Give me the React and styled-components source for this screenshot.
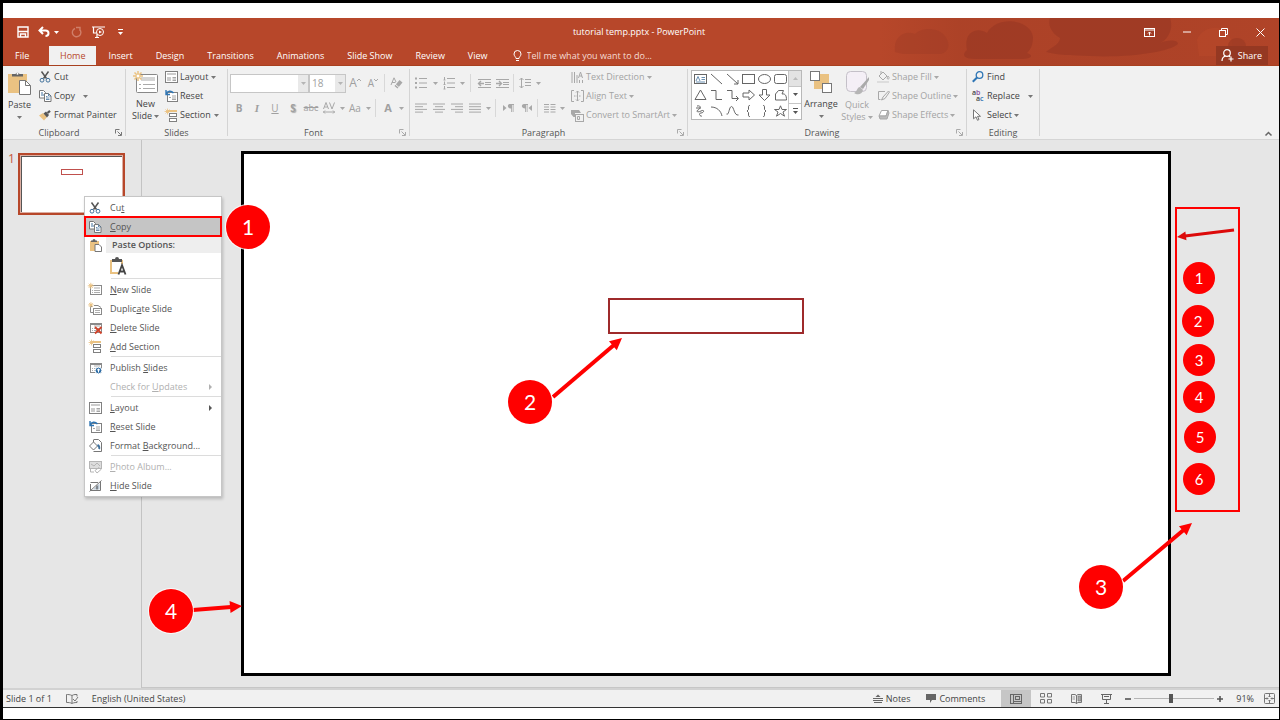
import React from "react";
import styled, { createGlobalStyle } from "styled-components";

const GlobalStyle = createGlobalStyle`
  *, *::before, *::after { box-sizing: border-box; }
  body { margin: 0; background: #fff; }
  body, button, input, select {
    font-family: "Open Sans", "Noto Sans", sans-serif;
    font-size: 9px;
    line-height: 12px;
    color: #444;
  }
  button { margin: 0; padding: 0; border: 0; background: none; text-align: left; white-space: nowrap; }
  svg { display: block; flex: none; overflow: visible; }
`;

const Frame = styled.div`
  min-height: 100vh;
  display: flex;
  flex-direction: column;
  border: solid #000;
  border-width: 3px 1px 1px 3px;
  padding: 15px 0 11px;
  background: #fff;
`;

/* ---------- title bar ---------- */

const Header = styled.header`
  position: relative;
  background: #b7472a;
  border-bottom: 1px solid #a8401f;
`;
const Backdrop = styled.svg`
  position: absolute;
  top: 0;
  right: 0;
  width: 400px;
  height: 47px;
`;
const TitleRow = styled.div`
  position: relative;
  display: grid;
  grid-template-columns: 1fr auto 1fr;
  align-items: center;
  height: 28px;
  padding-right: 4px;
`;
const QuickAccess = styled.div`
  display: flex;
  align-items: center;
  padding-left: 13px;
`;
const QuickButton = styled.button`
  display: flex;
  align-items: center;
  justify-content: center;
  width: ${(p) => p.$w}px;
  height: 20px;
`;
const DocTitle = styled.h1`
  margin: 0;
  font-size: 9px;
  font-weight: 400;
  line-height: 28px;
  color: #fff;
`;
const WindowButtons = styled.div`
  display: flex;
  justify-content: flex-end;
  margin-right: -4px;
`;
const WindowButton = styled.button`
  display: flex;
  align-items: center;
  justify-content: center;
  width: 37px;
  height: 26px;
`;
const TabRow = styled.nav`
  position: relative;
  display: flex;
  align-items: stretch;
  height: 19px;
`;
const Tab = styled.button`
  padding: 0 11px;
  margin-right: 1px;
  line-height: 20px;
  color: ${(p) => (p.$active ? "#b7472a" : "#fff")};
  background: ${(p) => (p.$active ? "#f1f1f1" : "transparent")};
`;
const FileTab = styled(Tab)`
  width: 45px;
  padding-left: 12px;
`;
const TellMe = styled.label`
  display: flex;
  align-items: center;
  gap: 5px;
  margin-left: 13px;
`;
const TellInput = styled.input`
  width: 160px;
  height: 18px;
  padding: 0;
  border: 0;
  background: none;
  outline: 0;
  &::placeholder { color: #f6dcd4; opacity: 1; }
`;
const Share = styled.button`
  display: flex;
  align-items: center;
  gap: 4px;
  margin-left: auto;
  margin-right: 11px;
  padding: 0 6px 0 5px;
  color: #fff;
  background: #953822;
`;

/* ---------- ribbon ---------- */

const RibbonBar = styled.div`
  display: flex;
  height: 74px;
  background: #f1f1f1;
  border-bottom: 1px solid #d5d5d5;
`;
const Group = styled.section`
  display: flex;
  flex: none;
  flex-direction: column;
  width: ${(p) => p.$w}px;
`;
const GroupBody = styled.div`
  display: flex;
  flex: 1;
  padding: 2px 0 0 ${(p) => p.$pad || 2}px;
`;
const GroupFooter = styled.div`
  display: flex;
  align-items: center;
  height: 13px;
`;
const GroupName = styled.h2`
  flex: 1;
  margin: 0;
  font-size: 9px;
  font-weight: 400;
  line-height: 12px;
  text-align: center;
  color: #555;
`;
const Launcher = styled.button`
  width: 10px;
`;
const GroupRule = styled.div`
  flex: none;
  width: 1px;
  margin: 3px 0;
  background: #d4d4d4;
`;
const Stack = styled.div`
  display: flex;
  flex-direction: column;
  gap: 1px;
  margin-left: ${(p) => p.$ml || 0}px;
`;
const Command = styled.button`
  display: flex;
  align-items: center;
  height: 18px;
  color: ${(p) => (p.disabled ? "#a3a3a3" : "#444")};
  > svg:first-child { margin-right: ${(p) => p.$gap || 3}px; }
`;
const BigCommand = styled.button`
  display: flex;
  flex-direction: column;
  align-items: center;
  width: ${(p) => p.$w}px;
  padding-top: 3px;
  color: ${(p) => (p.disabled ? "#a3a3a3" : "#444")};
  > svg:first-child { margin-bottom: 4px; }
`;
const CaretLine = styled.span`
  display: flex;
  align-items: center;
  justify-content: center;
  height: 12px;
`;
const ToolLines = styled.div`
  display: flex;
  flex-direction: column;
  gap: 7px;
  width: ${(p) => p.$w}px;
  padding-top: 6px;
`;
const ToolLine = styled.div`
  display: flex;
  align-items: center;
  height: 18px;
`;
const Tool = styled.button`
  display: flex;
  align-items: center;
  justify-content: center;
  width: ${(p) => p.$w || 18}px;
  height: 18px;
  color: #a0a0a0;
`;
const Glyph = styled.span`
  font-size: ${(p) => p.$size || 10}px;
  font-weight: ${(p) => (p.$bold ? 700 : 400)};
  font-style: ${(p) => (p.$italic ? "italic" : "normal")};
  font-family: ${(p) => (p.$italic ? '"Liberation Serif", serif' : "inherit")};
  text-decoration: ${(p) => p.$line || "none"};
  text-shadow: ${(p) => (p.$shadow ? "1px 1px 1px #aaa" : "none")};
`;
const ToolRule = styled.span`
  width: 1px;
  height: 18px;
  margin: 0 ${(p) => p.$m}px;
  background: #d8d8d8;
`;
const Combo = styled.span`
  display: flex;
  width: ${(p) => p.$w}px;
  height: 19px;
  border: 1px solid #c6c6c6;
  background: #fff;
`;
const ComboSelect = styled.select`
  flex: 1;
  min-width: 0;
  padding: 0 2px;
  border: 0;
  background: #fff;
  appearance: none;
  font-size: 10px;
  color: #a0a0a0;
  opacity: 1;
`;
const ComboArrow = styled.span`
  display: flex;
  align-items: center;
  justify-content: center;
  width: 10px;
  background: #e9e9e9;
`;
const Gallery = styled.div`
  display: flex;
  width: 111px;
  height: 50px;
  margin: 2px 0 0 1px;
  border: 1px solid #b8b8b8;
  background: #fff;
`;
const ShapeGrid = styled.div`
  display: grid;
  grid-template-columns: repeat(6, 16px);
  grid-template-rows: repeat(3, 16px);
`;
const ShapeButton = styled.button`
  display: flex;
  align-items: center;
  justify-content: center;
`;
const GallerySteps = styled.div`
  display: flex;
  flex: 1;
  flex-direction: column;
  border-left: 1px solid #c6c6c6;
`;
const GalleryStep = styled.button`
  display: flex;
  flex: 1;
  align-items: center;
  justify-content: center;
  background: ${(p) => (p.disabled ? "#e3e3e3" : "#fff")};
  & + & { border-top: 1px solid #c6c6c6; }
`;
const Collapse = styled.button`
  align-self: flex-end;
  margin: 0 7px 3px auto;
`;

/* ---------- workspace ---------- */

const Workspace = styled.main`
  position: relative;
  display: flex;
  flex: 1;
  background: #e6e6e6;
`;
const ThumbPane = styled.aside`
  display: flex;
  align-items: flex-start;
  flex: none;
  width: 139px;
  padding: 13px 0 0 5px;
  border-right: 1px solid #c3c3c3;
`;
const ThumbNumber = styled.span`
  width: 10px;
  font-size: 12px;
  color: #c5553a;
`;
const Thumb = styled.button`
  display: flex;
  justify-content: center;
  align-items: flex-start;
  width: 107px;
  height: 62px;
  padding-top: 14px;
  border: 2px solid #b7472a;
  background: #fff;
  box-shadow: inset 1px 1px 0 #dcaea2, inset -1px -1px 0 #dcaea2, inset 2px 2px 0 #555;
`;
const ThumbBox = styled.span`
  width: 22px;
  height: 6px;
  border: 1px solid #c0504d;
`;
const Stage = styled.div`
  display: flex;
  flex: 1;
  padding: 11px 108px 11px 99px;
  border-bottom: 1px solid #c6c6c6;
`;
const Slide = styled.article`
  display: flex;
  flex: 1;
  justify-content: center;
  align-items: flex-start;
  padding-top: 144px;
  border: 3px solid #000;
  background: #fff;
`;
const SlideBox = styled.div`
  width: 196px;
  height: 36px;
  border: 2px solid #9e2a2b;
`;

/* ---------- annotations ---------- */

const Arrows = styled.svg`
  position: absolute;
  inset: 0;
  width: 100%;
  height: 100%;
  z-index: 3;
  pointer-events: none;
`;
const Badge = styled.span`
  position: absolute;
  z-index: 4;
  left: ${(p) => p.$x}px;
  top: ${(p) => p.$y}px;
  display: flex;
  align-items: center;
  justify-content: center;
  width: ${(p) => (p.$small ? 32 : 44)}px;
  height: ${(p) => (p.$small ? 32 : 44)}px;
  padding-bottom: 1px;
  border-radius: 50%;
  background: #ff0000;
  color: #fff;
  font-family: Lato, sans-serif;
  font-size: ${(p) => (p.$small ? 15 : 21)}px;
  line-height: 24px;
  box-shadow: ${(p) => (p.$small ? "none" : "0 0 0 1px rgba(255,255,255,.8)")};
`;
const Callout = styled.div`
  position: absolute;
  left: 1172px;
  top: 67px;
  width: 65px;
  height: 305px;
  border: 2px solid #ff0000;
`;

/* ---------- context menu ---------- */

const Menu = styled.div`
  position: absolute;
  z-index: 2;
  left: 81px;
  top: 56px;
  width: 138px;
  padding: 1px 0;
  border: 1px solid #c6c6c6;
  background: #fff;
  box-shadow: 1px 2px 3px rgba(0, 0, 0, 0.2);
`;
const MenuItem = styled.button`
  display: grid;
  grid-template-columns: 20px 1fr 12px;
  align-items: center;
  width: 100%;
  height: 19px;
  padding-left: 4px;
  column-gap: 1px;
  color: ${(p) => (p.disabled ? "#b0b0b0" : "#555")};
  background: ${(p) => (p.$active ? "#c5c5c5" : "transparent")};
  outline: ${(p) => (p.$active ? "2px solid #ff0000" : "0")};
  outline-offset: -1px;
`;
const MenuHeading = styled.div`
  display: flex;
  align-items: center;
  height: 18px;
  padding-left: 4px;
  font-weight: 600;
  color: #555;
`;
const MenuHeadingText = styled.span`
  flex: 1;
  margin-left: 4px;
  padding-left: 6px;
  line-height: 16px;
  background: #eee;
`;
const PasteRow = styled.div`
  height: 24px;
  padding: 3px 0 0 24px;
`;
const MenuRule = styled.hr`
  height: 1px;
  margin: 0 0 1px 26px;
  border: 0;
  background: #dcdcdc;
`;

/* ---------- status bar ---------- */

const StatusBar = styled.footer`
  display: flex;
  align-items: center;
  height: 20px;
  padding: 0 4px 0 3px;
  border-top: 2px solid #d2d2d2;
  border-bottom: 1px solid #333;
  background: #f1f1f1;
`;
const StatusText = styled.span`
  margin-right: 14px;
`;
const Language = styled.button`
  margin-left: 14px;
`;
const StatusButton = styled.button`
  display: flex;
  align-items: center;
  gap: 3px;
  margin-right: 16px;
`;
const ViewButton = styled.button`
  display: flex;
  align-items: center;
  justify-content: center;
  width: 30px;
  height: 17px;
  background: ${(p) => (p.$active ? "#c6c6c6" : "transparent")};
`;
const Push = styled.span`
  flex: 1;
`;
const ZoomGroup = styled.div`
  display: flex;
  align-items: center;
  gap: 3px;
  padding: 0 13px 0 4px;
`;
const ZoomValue = styled.span`
  margin-right: 10px;
`;
const ZoomSlider = styled.input`
  width: 80px;
  height: 12px;
  margin: 0;
  appearance: none;
  background: linear-gradient(#b5b5b5, #b5b5b5) center / 100% 1px no-repeat;
  &::-webkit-slider-thumb {
    appearance: none;
    width: 4px;
    height: 9px;
    background: #555;
  }
`;

/* ---------- icons ---------- */

const G = "#777";
const D = "#a8a8a8";
const BLUE = "#41719c";
const GOLD = "#eac282";

const Icon = ({ w = 12, h = 12, c = G, sw = 1, children }) => (
  <svg width={w} height={h} viewBox={`0 0 ${w} ${h}`} fill="none" stroke={c} strokeWidth={sw} aria-hidden="true">
    {children}
  </svg>
);
const CaretSvg = styled.svg`
  margin-left: ${(p) => p.$ml}px;
`;
const Caret = ({ c = "#777", ml = 0 }) => (
  <CaretSvg $ml={ml} width="5" height="3" viewBox="0 0 5 3" aria-hidden="true">
    <path d="M0 0h5L2.500 3z" fill={c} />
  </CaretSvg>
);
const LaunchIcon = ({ c = "#888" }) => (
  <Icon w={7} h={7} c={c}><path d="M.5 4.500v-4h4M2.500 2.500l3.500 3.500M6.500 3v3.500H3" /></Icon>
);
const Star = ({ x = 0, y = 0, r = 3 }) => (
  <g transform={`translate(${x} ${y}) scale(${r / 3})`} stroke={GOLD}>
    <path d="M3-.5v7M-.5 3h7M.6.6l4.800 4.800M5.400.6L.6 5.400" />
    <circle cx="3" cy="3" r="1.500" fill={GOLD} stroke="none" />
  </g>
);
const ScissorsIcon = () => (
  <Icon w={12} h={12}>
    <path d="M2.500.5l5 7M9.500.5l-5 7" strokeWidth="1.500" stroke="#555" />
    <circle cx="3" cy="9.200" r="1.900" stroke={BLUE} /><circle cx="9" cy="9.200" r="1.900" stroke={BLUE} />
  </Icon>
);
const CopyIcon = () => (
  <Icon w={13} h={12}>
    <path d="M.5.5h4l2 2v5.500h-6z" fill="#fff" /><path d="M2 3h2M2 5h3" stroke={BLUE} />
    <path d="M5.500 3.500h4l2.500 2.500v5.500H5.500z" fill="#fff" /><path d="M9.500 3.500V6H12M7 6.500h1.500M7 8h3.500M7 9.500h3.500" stroke={BLUE} strokeWidth=".8" />
  </Icon>
);
const BrushIcon = () => (
  <Icon w={13} h={11}>
    <path d="M0 5.500L4 3l4 4-3 3.500z" fill={GOLD} stroke="none" />
    <path d="M4.500 3.500L7 1.500l3 3.500-2 2.500z" fill="#555" stroke="none" /><path d="M8.500 3L11 .8" strokeWidth="2.200" stroke="#555" />
  </Icon>
);
const PasteIcon = () => (
  <Icon w={23} h={24}>
    <path d="M0 3h19v19H0z" fill={GOLD} stroke="none" /><path d="M4 5.500V3h3.500a2.200 2.200 0 014 0H15v2.500z" fill="#666" stroke="none" />
    <circle cx="9.500" cy="2.800" r="1" fill="#fff" stroke="none" />
    <path d="M11.500 9.500h6l5 5v9h-11z" fill="#fff" stroke="#777" /><path d="M17.500 9.500v5h5" stroke="#777" />
  </Icon>
);
const NewSlideIcon = () => (
  <Icon w={25} h={23}>
    <rect x="3.500" y="3.500" width="21" height="18" rx="1" fill="#fff" stroke="#888" />
    <path d="M8 6h14v4H8z" fill="#d5d5d5" stroke="none" /><path d="M6 13.500h2M10 13.500h12M6 17.500h2M10 17.500h12" stroke="#aaa" />
    <g stroke={GOLD} strokeWidth="1.500"><path d="M5 0v10M0 5h10M1.500 1.500l7 7M8.500 1.500l-7 7" /></g>
    <circle cx="5" cy="5" r="2" fill="#fff" stroke={GOLD} />
  </Icon>
);
const LayoutIcon = () => (
  <Icon w={13} h={12} c="#808080">
    <rect x=".5" y=".5" width="12" height="11" fill="#fff" /><path d="M2 2h9v2H2zM2 6h4v4H2z" fill="#ccc" stroke="none" /><path d="M7.500 6.500h3.500M7.500 8h3.500M7.500 9.500h3.500" strokeWidth=".7" />
  </Icon>
);
const ResetIcon = () => (
  <Icon w={13} h={12} c="#808080">
    <rect x="2.500" y="2.500" width="10" height="9" fill="#fff" /><path d="M4 7.500h2M7 6h4M7 8h4M7 9.500h4" strokeWidth=".7" />
    <path d="M1 0v4.500h4M1 4C2.500.8 6 .2 8.500 3" stroke="#2f76b5" strokeWidth="1.400" />
  </Icon>
);
const SectionIcon = () => (
  <Icon w={13} h={13} c="#808080">
    <path d="M3 2h9" stroke={GOLD} strokeWidth="2" /><Star r={2.500} />
    <rect x="4.500" y="4.500" width="7" height="3" fill="#fff" /><rect x="4.500" y="9.500" width="7" height="3" fill="#fff" />
  </Icon>
);
const EraserIcon = () => (
  <Icon w={13} h={12} c={D}>
    <path d="M1 8L4 .8 6 5M2 5.500h3.500" /><path d="M4.500 9l5-6 3 2.500-5 6z" fill={D} stroke="none" /><path d="M5 7l4 3.500" stroke="#f1f1f1" />
  </Icon>
);
const BulletsIcon = ({ numbered }) => (
  <Icon w={12} h={12} c={D}>
    {[1.5, 6, 10.5].map((y) => (
      <g key={y}>
        {numbered ? <path d={`M1.500 ${y - 1.500}v3M.5 ${y + 1.500}h2`} /> : <rect x="0" y={y - 1} width="2" height="2" fill={D} stroke="none" />}
        <path d={`M4 ${y}h8`} />
      </g>
    ))}
  </Icon>
);
const IndentIcon = ({ flip }) => (
  <Icon w={13} h={11} c={D}>
    <path d="M0 1.500h13M7 4.500h6M7 6.500h6M0 9.500h13" />
    <path d={flip ? "M0 5.500h5M3 3l2.500 2.500L3 8" : "M6 5.500H1M3 3L.5 5.500 3 8"} strokeWidth="1.400" />
  </Icon>
);
const SpacingIcon = () => (
  <Icon w={12} h={12} c={D}><path d="M2.500 1v10M.5 3l2-2 2 2M.5 9l2 2 2-2M6 2.500h6M6 5.500h6M6 8.500h6" /></Icon>
);
const AlignIcon = ({ rows }) => (
  <Icon w={12} h={10} c={D}>
    {rows.map(([x, len], i) => <path key={i} d={`M${x} ${i * 2.700 + 1}h${len}`} />)}
  </Icon>
);
const PilcrowIcon = ({ flip }) => (
  <svg width="11" height="8" viewBox="0 0 11 8" aria-hidden="true">
    <path d={flip ? "M11 1L7.500 4 11 7z" : "M0 1l3.500 3L0 7z"} fill={D} />
    <path transform={flip ? "translate(-4 0)" : undefined} d="M7 0h4v1h-.5v7h-.8V1H9v7h-.8V4.500C4 4.500 4 0 7 0z" fill={D} />
  </svg>
);
const ColumnsIcon = () => (
  <Icon w={11} h={9} c={D}><path d="M0 .5h5M0 3h5M0 5.500h5M0 8h5M6.500.5h5M6.500 3h5M6.500 5.500h5M6.500 8h5" /></Icon>
);
const TextDirectionIcon = () => (
  <Icon w={13} h={13} c={D}><path d="M1 1v11M3.500 1v11M6 4v8M7.500 7l2-6 2 6M8.500 5h2.500M8.500 9v3M11.500 9v3" /></Icon>
);
const AlignTextIcon = () => (
  <Icon w={13} h={12} c={D}><path d="M3 .5H.5v11H3M10 .5h2.500v11H10M6.500 1v10M5 2.500L6.500 1 8 2.500M5 9.500L6.500 11 8 9.500" /><path d="M3 6h7" strokeDasharray="1.500 1" /></Icon>
);
const SmartArtIcon = () => (
  <Icon w={13} h={13} c={D}><path d="M0 1h8l2 3H4v4H2.500L0 5z" fill={D} stroke="none" /><rect x="4.500" y="5.500" width="8" height="7" fill="#f1f1f1" /><path d="M6.500 7.500h2v3h-2z" /></Icon>
);
const ArrangeIcon = () => (
  <Icon w={23} h={23}><path d="M4 3h15v15H4z" fill={GOLD} stroke="none" /><rect x=".5" y=".5" width="9" height="9" fill="#fff" /><rect x="12.500" y="12.500" width="9" height="9" fill="#fff" /><path d="M4 11h0v7M11 3V0" stroke="none" /></Icon>
);
const QuickStylesIcon = () => (
  <Icon w={25} h={24} c="#c4c0c8">
    <rect x="1.500" y=".5" width="20" height="20" rx="4" fill="#f4eff6" />
    <path d="M24 6l-9 10 3 2 6-9z" fill="#aaa" stroke="none" /><path d="M15 16c-3 0-3 5-6 6 3 2 8 2 9-3z" fill="#b5b5b5" stroke="none" />
  </Icon>
);
const FillIcon = () => (
  <Icon w={13} h={12} c={D}><path d="M2 5l4-4 4 4-4 4zM4 3V0M11 5c2 2 1 3 0 3s-1-1 0-3" /><path d="M0 11h12" stroke="#ddd" strokeWidth="2" /></Icon>
);
const OutlineIcon = () => (
  <Icon w={13} h={12} c={D}><path d="M8 1.500H1.500v8h2M11.500 1L6 7l-1.500 3L8 8.500 12.500 2z" /></Icon>
);
const EffectsIcon = () => (
  <Icon w={13} h={12} c={D}><path d="M2 7l2.500-5.500H11L9 7z" fill="#fff" /><path d="M2 7l1 3h7l2-6-1-2.500L9 7z" fill="#bbb" /></Icon>
);
const FindIcon = () => (
  <Icon w={12} h={12} c="#2f76b5"><circle cx="7.500" cy="4" r="3.300" strokeWidth="1.300" /><path d="M5 6.500L.8 10.800" strokeWidth="2" /></Icon>
);
const ReplaceArt = styled.span`
  display: grid;
  grid-template-rows: 6px 6px;
  width: 13px;
  margin-right: 2px;
  font-size: 7px;
  font-weight: 600;
  line-height: 6px;
`;
const ReplaceWord = styled.span`
  padding-left: ${(p) => p.$in || 0}px;
  > b { font-weight: 600; color: ${(p) => p.$c}; }
`;
const ReplaceIcon = () => (
  <ReplaceArt aria-hidden="true">
    <ReplaceWord $c="#8a4a9c">a<b>b</b></ReplaceWord>
    <ReplaceWord $c="#2f76b5" $in={4}>a<b>c</b></ReplaceWord>
  </ReplaceArt>
);
const SelectIcon = () => (
  <Icon w={9} h={12}><path d="M1.500.8v9L4 7.800l1.500 3.500 1.500-.8L5.500 7.300h3z" fill="#fff" /></Icon>
);

const MiniSlide = ({ children, star }) => (
  <Icon w={13} h={12} c="#8a8a8a">
    <rect x="1.500" y="1.500" width="11" height="9" fill="#fff" /><path d="M5 4h6M3 6.500h1M5 6.500h6M3 8.500h1M5 8.500h6" strokeWidth=".7" />
    {star && <Star r={2.600} x={-0.8} y={-0.8} />}
    {children}
  </Icon>
);
const DuplicateIcon = () => (
  <Icon w={13} h={12} c="#8a8a8a"><path d="M3.500 3.500H1.500v6h3M5 2.500h4l3 2" /><rect x="4.500" y="5.500" width="8" height="6" fill="#fff" /><path d="M6 7.500h5M6 9.500h5" strokeWidth=".7" /><Star r={2.400} x={-0.5} y={-0.5} /></Icon>
);
const DeleteIcon = () => (
  <MiniSlide><path d="M1 2h12" strokeWidth="2" /><path d="M6 5l6.500 6.500M12.500 5L6 11.500" stroke="#d1432b" strokeWidth="1.800" /></MiniSlide>
);
const PublishIcon = () => (
  <MiniSlide><path d="M1 2h12" strokeWidth="2" /><circle cx="9.500" cy="8.500" r="3.400" fill="#2f6ea5" stroke="#fff" /><path d="M9.500 10.500v-3.500M8 8.300L9.500 7l1.500 1.300" stroke="#fff" /></MiniSlide>
);
const BackgroundIcon = () => (
  <Icon w={13} h={13} c="#777"><path d="M4.500.5h5l3 3v9h-8" fill="#fff" /><path d="M0.500 7l4-4 4 4-4 4zM4.500 3V1" fill="#fff" /><path d="M8.500 6c2 1 2 3 1.500 4" stroke={BLUE} strokeWidth="2" /></Icon>
);
const AlbumIcon = () => (
  <Icon w={13} h={12} c="#b5b5b5"><rect x=".5" y=".5" width="12" height="7" fill="#ddd" /><path d="M2 3l3 2 3-3 3 3M1.500 8v3H5M6 9.500l4-3 2 2-4 3.500z" /></Icon>
);
const HideIcon = () => (
  <Icon w={13} h={12} c="#777"><path d="M1.500 4v6.500h10V1.500M1.500 2.500H9M.5 11.500L12.500.5" /><path d="M10.500 3.500v6H4z" fill="#b9c7d4" stroke="none" /><path d="M8 5.500v4" stroke="#444" /></Icon>
);
const MenuPasteIcon = () => (
  <Icon w={13} h={13}><path d="M1 2h9v10H1z" fill={GOLD} stroke="none" /><path d="M2 3V1.500h1.500a1.500 1.500 0 013 0H8V3z" fill="#666" stroke="none" /><path d="M6 5.500h4l2.500 2.500v4.500H6z" fill="#fff" /></Icon>
);
const KeepTextIcon = () => (
  <svg width="18" height="19" viewBox="0 0 18 19" aria-hidden="true">
    <path d="M2 3v13h7M13 3v4" fill="none" stroke={GOLD} strokeWidth="2" /><path d="M3 5V2h3a2 2 0 014 0h3v3z" fill="#555" />
    <path d="M9.500 17.500L13 8l3.500 9.500M10.500 14.500h5" fill="none" stroke="#444" strokeWidth="1.800" />
  </svg>
);

const shapes = [
  ["Text box", <><rect x=".5" y="1.500" width="12" height="9" /><path d="M2 8l2-4.500L6 8M7.500 4.500h3.500M7.500 6.500h3.500M2 9h9" stroke={BLUE} strokeWidth=".8" /></>],
  ["Line", <path d="M1 1l11 10" />],
  ["Arrow line", <path d="M1 1l11 10M12 7v4H8" />],
  ["Rectangle", <rect x=".5" y="1.500" width="12" height="9" />],
  ["Oval", <ellipse cx="6.500" cy="6" rx="6" ry="4.500" />],
  ["Rounded rectangle", <rect x=".5" y="1.500" width="12" height="9" rx="2" />],
  ["Triangle", <path d="M6.500 1L12 10.500H1z" />],
  ["Elbow connector", <path d="M1 1.500h5v9h6" />],
  ["Elbow arrow", <path d="M1 1.500h5v8h6M10 7l2.500 2.500L10 12" />],
  ["Right arrow", <path d="M1 4h6V1l5.500 5L7 11V8H1z" />],
  ["Down arrow", <path d="M4.500.5h4V6H12l-5.500 5.500L1 6h3.500z" />],
  ["Freeform", <path d="M1.500 11V5l3-3.500h5L8 5c3-.5 4.500 1 4.500 6z" />],
  ["Scribble", <path d="M3 1c5-1 3 3 1 4S3 8 7 6s3 2 0 2-1 4 1 3M2 3l5 0" />],
  ["Arc", <path d="M1 2c6 0 10 4 11 9" />],
  ["Curve", <path d="M.5 9C3 11 3 1.500 5.500 1.500S8 11 12.500 10" />],
  ["Left brace", <path d="M8 .5C6.500.5 6.500 1 6.500 2v2.500L5 6l1.500 1.500V10c0 1 0 1.500 1.500 1.500" />],
  ["Right brace", <path d="M5 .5C6.500.5 6.500 1 6.500 2v2.500L8 6 6.500 7.500V10c0 1 0 1.500-1.500 1.500" />],
  ["Star", <path d="M6.500.8L8 4.500h4.500L9 7l1.500 4.200-4-2.700-4 2.700L4 7 .5 4.500H5z" />],
];

const menuItems = [
  { icon: <MiniSlide star />, text: <><u>N</u>ew Slide</> },
  { icon: <DuplicateIcon />, text: <>Duplic<u>a</u>te Slide</> },
  { icon: <DeleteIcon />, text: <><u>D</u>elete Slide</> },
  { icon: <SectionIcon />, text: <><u>A</u>dd Section</> },
  null,
  { icon: <PublishIcon />, text: <>Publish <u>S</u>lides</> },
  { icon: <span />, text: <>Check for <u>U</u>pdates</>, disabled: true, sub: true },
  null,
  { icon: <LayoutIcon />, text: <><u>L</u>ayout</>, sub: true },
  { icon: <ResetIcon />, text: <><u>R</u>eset Slide</> },
  { icon: <BackgroundIcon />, text: <>Format <u>B</u>ackground...</> },
  null,
  { icon: <AlbumIcon />, text: <><u>P</u>hoto Album...</>, disabled: true },
  { icon: <HideIcon />, text: <><u>H</u>ide Slide</> },
];

const arrows = [
  [550, 257, 619, 198],
  [1120, 441, 1189, 383],
  [190, 470, 239, 466],
];
const badges = [
  [223, 65, 1], [505, 240, 2], [1076, 425, 3], [146, 449, 4],
];
const smallBadges = [
  [1180, 122, 1], [1179, 165, 2], [1180, 204, 3], [1180, 241, 4], [1181, 281, 5], [1180, 323, 6],
];

const Arrow = ({ p: [x1, y1, x2, y2], color = "#ff0000", width = 4, head = 12 }) => {
  const len = Math.hypot(x2 - x1, y2 - y1);
  const angle = (Math.atan2(y2 - y1, x2 - x1) * 180) / Math.PI;
  return (
    <g transform={`translate(${x1} ${y1}) rotate(${angle})`}>
      <path d={`M0 0H${len - head + 1}`} stroke={color} strokeWidth={width} />
      <path d={`M${len} 0l${-head} ${-head / 2}v${head}z`} fill={color} />
    </g>
  );
};

const RibbonGroup = ({ name, w, pad, launch, children }) => (
  <>
    <Group $w={w} aria-label={name}>
      <GroupBody $pad={pad}>{children}</GroupBody>
      <GroupFooter>
        <GroupName>{name}</GroupName>
        {launch && <Launcher aria-label={`${name} settings`}><LaunchIcon c={launch} /></Launcher>}
      </GroupFooter>
    </Group>
    <GroupRule />
  </>
);

const TitleArea = () => (
  <Header>
    <Backdrop viewBox="0 0 400 47" fill="#9c3a24" aria-hidden="true">
      <defs>
        <linearGradient id="shade">
          <stop offset="0" stopColor="#a03c24" stopOpacity="0" />
          <stop offset=".2" stopColor="#a03c24" stopOpacity=".45" />
          <stop offset=".75" stopColor="#a03c24" stopOpacity=".4" />
          <stop offset="1" stopColor="#a03c24" stopOpacity=".3" />
        </linearGradient>
      </defs>
      <rect width="400" height="47" fill="url(#shade)" />
      <path d="M16 34C14 18 26 12 36 16c8-8 24-6 30 2 6 8 4 16-4 18H24z" opacity=".35" />
      <path d="M88 32C84 14 98 8 108 15c10-18 44-14 46 4 0 10-4 14-6 16 6 2 6 5-4 6H96c-14 0-12-6-8-9z" opacity=".8" />
      <path d="M171 0h120c4 10-2 22-10 25 6-3 18-4 18 1-8 8-50 14-88 12-16-1-28 0-44-4 6-5 14-8 14-14-10-6-12-14-10-20z" opacity=".8" />
      <path d="M318 22c4-12 22-16 28-8 8 6 10 14 4 24h-30z" fill="#b7472a" opacity=".7" />
      <ellipse cx="358" cy="28" rx="9" ry="8" opacity=".7" />
    </Backdrop>
    <TitleRow>
      <QuickAccess>
        <QuickButton $w={13} aria-label="Save">
          <Icon w={12} h={12} c="#fff"><path d="M1 1h10v10H1z" strokeWidth="1.400" /><path d="M1 5.500h10M3.500 11V8h5v3" strokeWidth="1.400" /></Icon>
        </QuickButton>
        <QuickButton $w={38} aria-label="Undo">
          <Icon w={12} h={10} c="#fff"><path d="M5 0L1.500 3.500 5 7M2 3.500h5.500c4 0 4 5.500 0 5.500" strokeWidth="2" /></Icon>
          <Caret c="#fff" ml={4} />
        </QuickButton>
        <QuickButton $w={18} aria-label="Redo">
          <Icon w={11} h={11} c="#d07f6a"><path d="M4 1.500a4.300 4.300 0 104.500.8M5 .5h4V4" strokeWidth="1.400" /></Icon>
        </QuickButton>
        <QuickButton $w={26} aria-label="Start slide show">
          <Icon w={13} h={12} c="#fff"><path d="M0 1h13M1.500 1v6H5M3 11.500h4M5 8v3" strokeWidth="1.200" /><circle cx="8" cy="6" r="3.500" /><path d="M7 4.500l3 1.500-3 1.500z" fill="#fff" stroke="none" /></Icon>
        </QuickButton>
        <QuickButton $w={18} aria-label="Customize toolbar">
          <Icon w={5} h={6} c="#fff"><path d="M0 .5h5" /><path d="M0 3h5L2.500 6z" fill="#fff" stroke="none" /></Icon>
        </QuickButton>
      </QuickAccess>
      <DocTitle>tutorial temp.pptx - PowerPoint</DocTitle>
      <WindowButtons>
        <WindowButton aria-label="Ribbon options"><Icon w={11} h={9} c="#fff"><rect x=".5" y=".5" width="10" height="8" /><path d="M1 2h9M5.500 7.500V4M4 5.500L5.500 4 7 5.500" /></Icon></WindowButton>
        <WindowButton aria-label="Minimize"><Icon w={8} h={2} c="#fff"><path d="M0 1h8" /></Icon></WindowButton>
        <WindowButton aria-label="Restore"><Icon w={9} h={9} c="#fff"><rect x=".5" y="2.500" width="6" height="6" /><path d="M2.500 2V.5h6v6H7" /></Icon></WindowButton>
        <WindowButton aria-label="Close"><Icon w={9} h={9} c="#fff"><path d="M.5.5l8 8M8.500.5l-8 8" /></Icon></WindowButton>
      </WindowButtons>
    </TitleRow>
    <TabRow>
      <FileTab>File</FileTab>
      <Tab $active>Home</Tab>
      {["Insert", "Design", "Transitions", "Animations", "Slide Show", "Review", "View"].map((t) => <Tab key={t}>{t}</Tab>)}
      <TellMe>
        <Icon w={9} h={12} c="#fff"><path d="M3 8.500C3 7 1 6 1 4a3.500 3.500 0 017 0c0 2-2 3-2 4.500zM3 10.500h3" /></Icon>
        <TellInput placeholder="Tell me what you want to do..." aria-label="Tell me what you want to do" />
      </TellMe>
      <Share>
        <Icon w={13} h={13} c="#fff"><circle cx="6" cy="4" r="3.300" strokeWidth="1.200" /><path d="M1 12c0-3 2-4.500 3.500-5M8 7l1 1M10 7.500v5M7.500 10h5" strokeWidth="1.200" /></Icon>
        Share
      </Share>
    </TabRow>
  </Header>
);

const Ribbon = () => (
  <RibbonBar>
    <RibbonGroup name="Clipboard" w={122} pad={3} launch="#777">
      <BigCommand $w={27}><PasteIcon />Paste<CaretLine><Caret /></CaretLine></BigCommand>
      <Stack $ml={6}>
        <Command><ScissorsIcon />Cut</Command>
        <Command $gap={2}><CopyIcon />Copy<Caret ml={8} /></Command>
        <Command $gap={2}><BrushIcon />Format Painter</Command>
      </Stack>
    </RibbonGroup>
    <RibbonGroup name="Slides" w={101} pad={5}>
      <BigCommand $w={29}><NewSlideIcon />New<CaretLine>Slide<Caret ml={2} /></CaretLine></BigCommand>
      <Stack $ml={5}>
        <Command $gap={2}><LayoutIcon />Layout<Caret ml={3} /></Command>
        <Command $gap={2}><ResetIcon />Reset</Command>
        <Command $gap={2}><SectionIcon />Section<Caret ml={3} /></Command>
      </Stack>
    </RibbonGroup>
    <RibbonGroup name="Font" w={181} launch="#aaa">
      <ToolLines $w={178}>
        <ToolLine>
          <Combo $w={79}><ComboSelect disabled aria-label="Font"><option></option></ComboSelect><ComboArrow><Caret c="#b5b5b5" /></ComboArrow></Combo>
          <Combo $w={37}><ComboSelect disabled aria-label="Font size"><option>18</option></ComboSelect><ComboArrow><Caret c="#b5b5b5" /></ComboArrow></Combo>
          <Tool disabled aria-label="Grow font"><Glyph $size={12}>A</Glyph><Icon w={4} h={9} c={D}><path d="M0 2l2-2 2 2" /></Icon></Tool>
          <Tool disabled aria-label="Shrink font"><Glyph>A</Glyph><Icon w={4} h={9} c={D}><path d="M0 0l2 2 2-2" /></Icon></Tool>
          <ToolRule $m={2} />
          <Tool disabled aria-label="Clear formatting"><EraserIcon /></Tool>
        </ToolLine>
        <ToolLine>
          <Tool disabled><Glyph $bold>B</Glyph></Tool>
          <Tool disabled><Glyph $bold $italic $size={11}>I</Glyph></Tool>
          <Tool disabled><Glyph $line="underline">U</Glyph></Tool>
          <Tool disabled><Glyph $bold $shadow>S</Glyph></Tool>
          <Tool disabled><Glyph $line="line-through" $size={9}>abc</Glyph></Tool>
          <Tool disabled aria-label="Character spacing">
            <Icon w={12} h={12} c={D}><path d="M.5 7L3 .5 5.500 7M1.500 5h3M6.500.5L9 7 11.500.5M0 10h12M2 8.500L.5 10 2 11.500M10 8.500l1.500 1.500-1.500 1.500" /></Icon>
          </Tool>
          <Tool $w={8} disabled aria-label="Spacing choices"><Caret c={D} /></Tool>
          <Tool disabled><Glyph>Aa</Glyph></Tool>
          <Tool $w={8} disabled aria-label="Case choices"><Caret c={D} /></Tool>
          <ToolRule $m={3} />
          <Tool disabled><Glyph $size={11} $bold>A</Glyph></Tool>
          <Tool $w={8} disabled aria-label="Color choices"><Caret c={D} /></Tool>
        </ToolLine>
      </ToolLines>
    </RibbonGroup>
    <RibbonGroup name="Paragraph" w={277} launch="#aaa">
      <ToolLines $w={159}>
        <ToolLine>
          <Tool disabled aria-label="Bullets"><BulletsIcon /></Tool>
          <Tool $w={10} disabled aria-label="Bullet choices"><Caret c={D} /></Tool>
          <Tool disabled aria-label="Numbering"><BulletsIcon numbered /></Tool>
          <Tool $w={8} disabled aria-label="Numbering choices"><Caret c={D} /></Tool>
          <ToolRule $m={4} />
          <Tool disabled aria-label="Decrease indent"><IndentIcon /></Tool>
          <Tool disabled aria-label="Increase indent"><IndentIcon flip /></Tool>
          <ToolRule $m={2} />
          <Tool disabled aria-label="Line spacing"><SpacingIcon /></Tool>
          <Tool $w={8} disabled aria-label="Line spacing choices"><Caret c={D} /></Tool>
        </ToolLine>
        <ToolLine>
          <Tool disabled aria-label="Align left"><AlignIcon rows={[[0, 12], [0, 8], [0, 12], [0, 8]]} /></Tool>
          <Tool disabled aria-label="Center"><AlignIcon rows={[[0, 12], [2, 8], [0, 12], [2, 8]]} /></Tool>
          <Tool disabled aria-label="Align right"><AlignIcon rows={[[0, 12], [4, 8], [0, 12], [4, 8]]} /></Tool>
          <Tool disabled aria-label="Justify"><AlignIcon rows={[[0, 12], [0, 12], [0, 12], [0, 12]]} /></Tool>
          <Tool $w={8} disabled aria-label="Justify choices"><Caret c={D} /></Tool>
          <ToolRule $m={3} />
          <Tool disabled aria-label="Left to right"><PilcrowIcon /></Tool>
          <Tool disabled aria-label="Right to left"><PilcrowIcon flip /></Tool>
          <ToolRule $m={2} />
          <Tool disabled aria-label="Columns"><ColumnsIcon /></Tool>
          <Tool $w={8} disabled aria-label="Column choices"><Caret c={D} /></Tool>
        </ToolLine>
      </ToolLines>
      <Stack>
        <Command disabled $gap={2}><TextDirectionIcon />Text Direction<Caret c={D} ml={2} /></Command>
        <Command disabled $gap={2}><AlignTextIcon />Align Text<Caret c={D} ml={2} /></Command>
        <Command disabled $gap={2}><SmartArtIcon />Convert to SmartArt<Caret c={D} ml={2} /></Command>
      </Stack>
    </RibbonGroup>
    <RibbonGroup name="Drawing" w={278} launch="#aaa">
      <Gallery>
        <ShapeGrid>
          {shapes.map(([name, d]) => <ShapeButton key={name} aria-label={name}><Icon w={13} h={12} c="#666">{d}</Icon></ShapeButton>)}
        </ShapeGrid>
        <GallerySteps>
          <GalleryStep disabled aria-label="Previous shapes"><Icon w={5} h={3} c="none"><path d="M0 3h5L2.500 0z" fill="#bbb" /></Icon></GalleryStep>
          <GalleryStep aria-label="Next shapes"><Caret c="#555" /></GalleryStep>
          <GalleryStep aria-label="More shapes"><Icon w={5} h={6} c="#555"><path d="M0 .5h5" /><path d="M0 3h5L2.500 6z" fill="#555" stroke="none" /></Icon></GalleryStep>
        </GallerySteps>
      </Gallery>
      <BigCommand $w={38}><ArrangeIcon />Arrange<CaretLine><Caret /></CaretLine></BigCommand>
      <BigCommand $w={34} disabled><QuickStylesIcon />Quick<CaretLine>Styles<Caret c={D} ml={2} /></CaretLine></BigCommand>
      <Stack $ml={3}>
        <Command disabled $gap={2}><FillIcon />Shape Fill<Caret c={D} ml={2} /></Command>
        <Command disabled $gap={2}><OutlineIcon />Shape Outline<Caret c={D} ml={2} /></Command>
        <Command disabled $gap={2}><EffectsIcon />Shape Effects<Caret c={D} ml={2} /></Command>
      </Stack>
    </RibbonGroup>
    <RibbonGroup name="Editing" w={72} pad={5}>
      <Stack>
        <Command><FindIcon />Find</Command>
        <Command><ReplaceIcon />Replace<Caret ml={8} /></Command>
        <Command $gap={6}><SelectIcon />Select<Caret ml={2} /></Command>
      </Stack>
    </RibbonGroup>
    <Collapse aria-label="Collapse ribbon"><Icon w={7} h={5} c="#666"><path d="M.5 4.500l3-3 3 3" strokeWidth="1.500" /></Icon></Collapse>
  </RibbonBar>
);

const ContextMenu = () => (
  <Menu role="menu">
    <MenuItem role="menuitem"><ScissorsIcon /><span>Cu<u>t</u></span></MenuItem>
    <MenuItem role="menuitem" $active><CopyIcon /><span><u>C</u>opy</span></MenuItem>
    <MenuHeading><MenuPasteIcon /><MenuHeadingText>Paste Options:</MenuHeadingText></MenuHeading>
    <PasteRow><button aria-label="Keep text only"><KeepTextIcon /></button></PasteRow>
    <MenuRule />
    {menuItems.map((m, i) =>
      m ? (
        <MenuItem key={i} role="menuitem" disabled={m.disabled}>
          {m.icon}<span>{m.text}</span>
          {m.sub && <Icon w={3} h={6} c="none"><path d="M0 0l3 3-3 3z" fill={m.disabled ? "#b0b0b0" : "#555"} /></Icon>}
        </MenuItem>
      ) : <MenuRule key={i} />
    )}
  </Menu>
);

const Status = () => (
  <StatusBar>
    <StatusText>Slide 1 of 1</StatusText>
    <Icon w={12} h={10} c="#777"><path d="M6 1.500C4 .5 2 .5.500 .5v8c2 0 4 0 5.500 1V1.500c1-.5 2-1 3-1h2v2M6 9.500c1-.5 2-1 5-1V7M7 5l2 2 3-4" /></Icon>
    <Language>English (United States)</Language>
    <Push />
    <StatusButton>
      <Icon w={10} h={9} c="#666"><path d="M0 4.500h10M0 6.500h10M1 8.500h8" /><path d="M2.500 3L5 .5 7.500 3z" fill="#666" stroke="none" /></Icon>Notes
    </StatusButton>
    <StatusButton>
      <Icon w={10} h={9} c="none"><path d="M0 0h10v6H6L4 9V6H0z" fill="#666" /></Icon>Comments
    </StatusButton>
    <ViewButton $active aria-label="Normal view"><Icon w={12} h={10} c="#666"><rect x=".5" y=".5" width="11" height="9" /><path d="M3.500.5v9M4 7.500h8" /><rect x="5.500" y="2.500" width="4" height="3" /></Icon></ViewButton>
    <ViewButton aria-label="Slide sorter"><Icon w={12} h={11} c="#777"><path d="M.5.500h4v3.500h-4zM7.500.5h4v3.500h-4zM.5 6.500h4v3.500h-4zM7.500 6.500h4v3.500h-4z" /></Icon></ViewButton>
    <ViewButton aria-label="Reading view"><Icon w={11} h={10} c="#777"><path d="M.5.500H4l1.500 1V9.500L4 8.500H.5zM10.500.5H7l-1.500 1v8L7 8.500h3.500z" /><path d="M7 2h3v5H7zM1.500 3H4M1.500 5H4" fill="#aaa" strokeWidth=".7" /></Icon></ViewButton>
    <ViewButton aria-label="Slide show"><Icon w={11} h={10} c="#666"><path d="M0 .5h11M1.500.5v5h8v-5M3 2.500h5M5.500 5.500v4M3 9.500h5" /></Icon></ViewButton>
    <ZoomGroup>
      <button aria-label="Zoom out"><Icon w={6} h={6} c="#555"><path d="M0 3h6" strokeWidth="1.600" /></Icon></button>
      <ZoomSlider type="range" min="0" max="100" defaultValue="46" aria-label="Zoom" />
      <button aria-label="Zoom in"><Icon w={6} h={6} c="#555"><path d="M0 3h6M3 0v6" strokeWidth="1.600" /></Icon></button>
    </ZoomGroup>
    <ZoomValue>91%</ZoomValue>
    <button aria-label="Fit slide to window"><Icon w={11} h={11} c="#777"><rect x=".5" y=".5" width="10" height="10" rx="1" /><path d="M5.500 1v3M5.500 7v3M1 5.500h3M7 5.500h3M4.500 3l1 1 1-1M4.500 8l1-1 1 1M3 4.500l1 1-1 1M8 4.500l-1 1 1 1" /></Icon></button>
  </StatusBar>
);

export default function App() {
  return (
    <>
      <GlobalStyle />
      <Frame>
        <TitleArea />
        <Ribbon />
        <Workspace>
          <ThumbPane>
            <ThumbNumber>1</ThumbNumber>
            <Thumb aria-label="Slide 1"><ThumbBox /></Thumb>
          </ThumbPane>
          <Stage>
            <Slide><SlideBox /></Slide>
          </Stage>
          <ContextMenu />
          <Callout />
          <Arrows aria-hidden="true">
            {arrows.map((p) => <Arrow key={p.join()} p={p} />)}
            <Arrow p={[1231, 90, 1174, 97]} color="#dc0a0a" width={3} head={9} />
          </Arrows>
          {badges.map(([x, y, n]) => <Badge key={n} $x={x} $y={y}>{n}</Badge>)}
          {smallBadges.map(([x, y, n]) => <Badge key={n} $small $x={x} $y={y}>{n}</Badge>)}
        </Workspace>
        <Status />
      </Frame>
    </>
  );
}
